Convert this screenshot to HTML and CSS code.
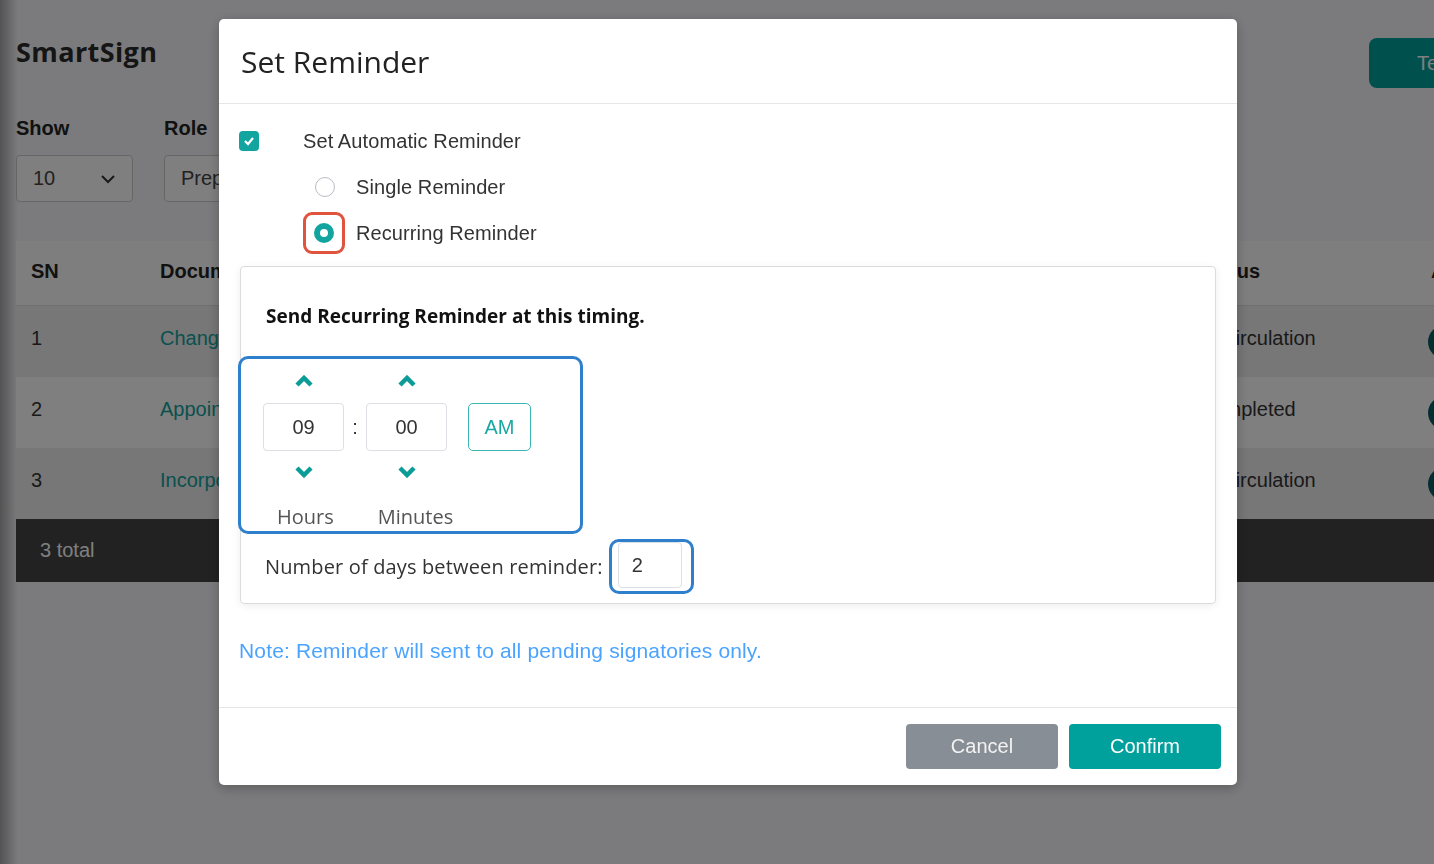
FILE: index.html
```html
<!DOCTYPE html>
<html lang="en">
<head>
  <meta charset="UTF-8">
  <meta name="viewport" content="width=device-width, initial-scale=1.0">
  <title>SmartSign - Documents</title>
  <link rel="stylesheet" href="styles.css">
</head>
<body>
  <div class="page">
    <div class="topbar">
      <div class="brand">SmartSign</div>
      <button class="btn-template">Template</button>
    </div>

    <div class="filters">
      <div class="filter">
        <label>Show</label>
        <div class="select show-select">
          <span>10</span>
          <svg width="16" height="10" viewBox="0 0 16 10"><polyline points="2,2 8,8 14,2" fill="none" stroke="#333" stroke-width="2"/></svg>
        </div>
      </div>
      <div class="filter">
        <label>Role</label>
        <div class="select role-select"><span>Preparer</span></div>
      </div>
      <div class="filter search">
        <label>Search</label>
        <input class="search-input" type="text">
      </div>
    </div>

    <table class="doc-table">
      <thead>
        <tr>
          <th class="col-sn">SN</th>
          <th class="col-doc">Document</th>
          <th class="col-status">Status</th>
          <th class="col-action">Action</th>
        </tr>
      </thead>
      <tbody>
        <tr>
          <td>1</td>
          <td><a href="#">Change of Directors</a></td>
          <td>In Circulation</td>
          <td><span class="act-btn"></span></td>
        </tr>
        <tr>
          <td>2</td>
          <td><a href="#">Appointment of Auditor</a></td>
          <td>Completed</td>
          <td><span class="act-btn"></span></td>
        </tr>
        <tr>
          <td>3</td>
          <td><a href="#">Incorporation Documents</a></td>
          <td>In Circulation</td>
          <td><span class="act-btn"></span></td>
        </tr>
      </tbody>
      <tfoot>
        <tr><td colspan="4">3 total</td></tr>
      </tfoot>
    </table>
  </div>

  <!-- reminder dialog -->
  <div class="overlay">
    <div class="modal">
      <div class="modal-header">Set Reminder</div>

      <div class="modal-body">
        <div class="opt-row">
          <span class="checkbox">
            <svg width="12" height="10" viewBox="0 0 12 10"><polyline points="2,5 5,8 10,2" fill="none" stroke="#fff" stroke-width="2.2"/></svg>
          </span>
          <span class="opt-label">Set Automatic Reminder</span>
        </div>
        <div class="opt-row sub">
          <span class="radio"></span>
          <span class="opt-label">Single Reminder</span>
        </div>
        <div class="opt-row sub">
          <span class="mark-red"><span class="radio checked"></span></span>
          <span class="opt-label">Recurring Reminder</span>
        </div>

        <div class="panel">
          <div class="panel-title">Send Recurring Reminder at this timing.</div>

          <div class="timepicker mark-blue">
            <div class="tp-grid">
              <span class="chev"><svg width="20" height="12" viewBox="0 0 20 12"><polyline points="3,10 10,3 17,10" fill="none" stroke="#0c9c98" stroke-width="4.5"/></svg></span>
              <span></span>
              <span class="chev"><svg width="20" height="12" viewBox="0 0 20 12"><polyline points="3,10 10,3 17,10" fill="none" stroke="#0c9c98" stroke-width="4.5"/></svg></span>
              <span></span>
              <span></span>

              <span class="tp-box">09</span>
              <span class="tp-colon">:</span>
              <span class="tp-box">00</span>
              <span></span>
              <span class="tp-ampm">AM</span>

              <span class="chev"><svg width="20" height="12" viewBox="0 0 20 12"><polyline points="3,2 10,9 17,2" fill="none" stroke="#0c9c98" stroke-width="4.5"/></svg></span>
              <span></span>
              <span class="chev"><svg width="20" height="12" viewBox="0 0 20 12"><polyline points="3,2 10,9 17,2" fill="none" stroke="#0c9c98" stroke-width="4.5"/></svg></span>
              <span></span>
              <span></span>
            </div>
            <div class="tp-labels">
              <span>Hours</span>
              <span>Minutes</span>
            </div>
          </div>

          <div class="days-row">
            <span>Number of days between reminder:</span>
            <span class="days-mark mark-blue"><span class="days-input">2</span></span>
          </div>
        </div>

        <p class="note">Note: Reminder will sent to all pending signatories only.</p>
      </div>

      <div class="modal-footer">
        <button class="btn btn-cancel">Cancel</button>
        <button class="btn btn-confirm">Confirm</button>
      </div>
    </div>
  </div>
</body>
</html>
```

FILE: styles.css
```css
body {
  margin: 0;
  padding: 0;
  font-family: "Liberation Sans", Arial, sans-serif;
  background: linear-gradient(90deg, #a6a6a8 0, #f7f7fa 18px);
  color: #222;
  height: 100vh;
  overflow: hidden;
}

.page {
  width: 1600px;
  padding: 0 0 0 16px;
}

.topbar {
  display: flex;
  justify-content: space-between;
  align-items: flex-start;
  width: 1418px;
  height: 117px;
  padding-top: 33px;
  box-sizing: border-box;
}

.brand {
  font-family: "Open Sans", sans-serif;
  font-weight: 700;
  font-size: 27px;
  color: #2a2a2a;
  letter-spacing: 0.4px;
}

.btn-template {
  margin-top: 5px;
  width: 120px;
  height: 50px;
  margin-right: -55px;
  background-color: #00a09d;
  border: none;
  border-radius: 8px;
  color: #fff;
  font-size: 20px;
  font-family: "Liberation Sans", Arial, sans-serif;
  text-align: left;
  padding-left: 48px;
}

.filters {
  display: flex;
  height: 124px;
}

.filter {
  display: flex;
  flex-direction: column;
}

.filter label {
  font-weight: 700;
  font-size: 20px;
  height: 38px;
  line-height: 22px;
}

.select {
  display: flex;
  align-items: center;
  justify-content: space-between;
  height: 47px;
  box-sizing: border-box;
  border: 1px solid #ccc;
  border-radius: 4px;
  background-color: #fff;
  padding: 0 16px;
  font-size: 20px;
  color: #444;
}

.show-select {
  width: 117px;
  margin-right: 31px;
}

.role-select {
  width: 200px;
}

.search {
  margin-left: auto;
  margin-right: -160px;
}

.search-input {
  width: 200px;
  height: 44px;
  box-sizing: border-box;
  border: 1px solid #888;
  background-color: #fff;
  margin-top: -1px;
}

.doc-table {
  border-collapse: collapse;
  width: 1600px;
  font-size: 20px;
}

.doc-table th {
  text-align: left;
  height: 60px;
  padding: 0 15px 4px;
  background-color: #fcfcfe;
  border-bottom: 1px solid #e0e0e2;
  font-weight: 700;
}

.doc-table td {
  height: 65px;
  padding: 0 15px 6px;
  color: #333;
}

.doc-table tbody tr:nth-child(odd) {
  background-color: #eeeef1;
}

.doc-table tbody tr:nth-child(even) {
  background-color: #fff;
}

.doc-table a {
  color: #14a39d;
  text-decoration: none;
}

.col-sn { width: 99px; }
.col-doc { width: 1009px; }
.col-status { width: 202px; }

.act-btn {
  display: inline-block;
  width: 34px;
  height: 34px;
  border-radius: 50%;
  background-color: #0b5c60;
  vertical-align: middle;
  margin: 6px 0 0 -3px;
}

.doc-table tfoot td {
  height: 63px;
  background-color: #444;
  color: #fff;
  padding: 0 0 0 24px;
}

/* overlay + dialog */
.overlay {
  position: fixed;
  top: 0;
  left: 0;
  right: 0;
  bottom: 0;
  background-color: rgba(0, 0, 0, 0.5);
  padding: 19px 0 0 219px;
}

.modal {
  width: 1018px;
  background-color: #fff;
  border-radius: 5px;
  box-shadow: 0 3px 12px rgba(0, 0, 0, 0.25);
}

.modal-header {
  height: 84px;
  display: flex;
  align-items: center;
  padding: 0 22px;
  font-family: "Open Sans", sans-serif;
  font-size: 30px;
  color: #222;
  border-bottom: 1px solid #e6e6e6;
}

.modal-body {
  padding: 14px 21px 44px 20px;
}

.opt-row {
  display: flex;
  align-items: center;
  height: 46px;
}

.opt-row.sub {
  padding-left: 76px;
}

.opt-label {
  font-size: 20px;
  color: #333;
  letter-spacing: 0.1px;
}

.checkbox {
  width: 20px;
  height: 20px;
  border-radius: 4px;
  background-color: #12a5a0;
  display: flex;
  align-items: center;
  justify-content: center;
  margin-right: 44px;
}

.radio {
  width: 20px;
  height: 20px;
  border-radius: 50%;
  box-sizing: border-box;
  border: 1.5px solid #b8bcc2;
  background-color: #fff;
  margin-right: 21px;
  flex-shrink: 0;
}

.radio.checked {
  border: 6px solid #12a5a0;
  margin-right: 0;
}

.mark-red {
  display: flex;
  border: 3px solid #e0533d;
  border-radius: 9px;
  padding: 8px;
  margin: 0 11px 0 -12px;
}

.mark-blue {
  border: 3px solid #2f80cc;
  border-radius: 10px;
}

.panel {
  margin-top: 10px;
  margin-left: 1px;
  border: 1px solid #dcdcdc;
  border-radius: 4px;
  box-shadow: 0 2px 8px rgba(0, 0, 0, 0.07);
  padding: 36px 25px 9px 25px;
}

.panel-title {
  font-family: "Open Sans", sans-serif;
  font-weight: 700;
  font-size: 19px;
  color: #111;
  line-height: 26px;
  margin-bottom: 27px;
}

.timepicker {
  margin-left: -28px;
  padding: 0 0 0 22px;
  width: 317px;
}

.tp-grid {
  display: grid;
  grid-template-columns: 81px 22px 81px 21px 63px;
  grid-template-rows: 44px 48px 42px;
  align-items: center;
}

.chev {
  display: flex;
  justify-content: center;
}

.tp-box {
  height: 48px;
  box-sizing: border-box;
  border: 1px solid #dcdfe3;
  border-radius: 4px;
  display: flex;
  align-items: center;
  justify-content: center;
  font-size: 20px;
  color: #333;
}

.tp-colon {
  text-align: center;
  font-size: 20px;
  color: #333;
}

.tp-ampm {
  height: 48px;
  box-sizing: border-box;
  border: 1.5px solid #3ab7b2;
  border-radius: 5px;
  display: flex;
  align-items: center;
  justify-content: center;
  font-size: 20px;
  color: #1aa8a3;
}

.tp-labels {
  display: flex;
  gap: 44px;
  padding-left: 14px;
  height: 38px;
  align-items: flex-end;
  font-family: "Open Sans", sans-serif;
  font-size: 20px;
  color: #555;
  line-height: 28px;
}

.days-row {
  display: flex;
  align-items: center;
  margin-top: 5px;
  margin-left: -1px;
  font-family: "Open Sans", sans-serif;
  font-size: 20px;
  letter-spacing: 0.15px;
  color: #333;
}

.days-mark {
  display: flex;
  margin-left: 6px;
  padding: 0 9px 3px 6px;
}

.days-input {
  width: 64px;
  height: 46px;
  box-sizing: border-box;
  border: 1px solid #dcdfe3;
  border-radius: 4px;
  display: flex;
  align-items: center;
  padding-left: 13px;
  font-family: "Liberation Sans", Arial, sans-serif;
  color: #333;
}

.note {
  margin: 35px 0 0 0;
  font-size: 21px;
  line-height: 24px;
  letter-spacing: 0.15px;
  color: #4aa3ff;
}

.modal-footer {
  display: flex;
  justify-content: flex-end;
  gap: 11px;
  padding: 16px 16px 16px 0;
  border-top: 1px solid #e6e6e6;
}

.btn {
  width: 152px;
  height: 45px;
  border: none;
  border-radius: 4px;
  font-size: 20px;
  font-family: "Liberation Sans", Arial, sans-serif;
  color: #fff;
  cursor: pointer;
}

.btn-cancel {
  background-color: #878e96;
  color: #f2f2f2;
}

.btn-confirm {
  background-color: #00a09d;
}
```
